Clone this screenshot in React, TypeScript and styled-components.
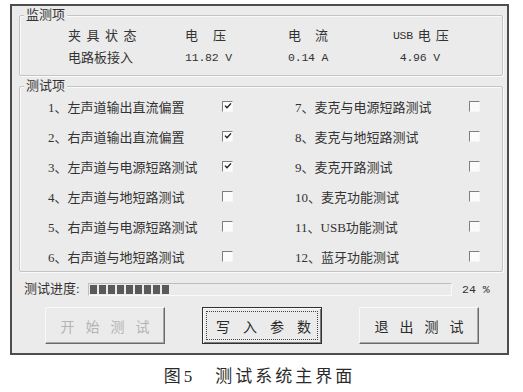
import React from 'react';
import styled, { createGlobalStyle } from 'styled-components';

const CJK = `"Liberation Serif", "Noto Sans CJK SC", serif`;
const MONO = `"Liberation Mono", "Noto Sans CJK SC", monospace`;

const Global = createGlobalStyle`
  html, body { margin: 0; padding: 0; background: #ffffff; }
  body { font-family: ${CJK}; color: #333333; }
`;

const Page = styled.div`
  width: 523px;
  height: 392px;
  box-sizing: border-box;
  padding: 4px 0 0 10px;
  display: flex;
  flex-direction: column;
`;

const Window = styled.div`
  width: 499px;
  height: 351px;
  box-sizing: border-box;
  border: 2px solid #4d4d4d;
  background: #ebebeb;
  padding: 9px 4px 0 7px;
  display: flex;
  flex-direction: column;
`;

const Group = styled.div<{ $h: number; $mt?: number }>`
  position: relative;
  height: ${(p) => p.$h}px;
  margin-top: ${(p) => p.$mt ?? 0}px;
  box-sizing: border-box;
  border: 1px solid #c4c4c4;
  border-radius: 2px;
  box-shadow: inset 1px 1px 0 #fafafa, 1px 1px 0 #fafafa;
`;

const Legend = styled.span`
  position: absolute;
  top: -9px;
  left: 4px;
  padding: 0 2px;
  background: #ebebeb;
  font-size: 13px;
  line-height: 16px;
  color: #333;
`;

const MonitorGrid = styled.div`
  display: grid;
  grid-template-columns: 117px 103px 105px auto;
  grid-template-rows: 16px 16px;
  row-gap: 6px;
  padding: 12px 0 0 48px;
  font-size: 13px;
  line-height: 16px;
  white-space: nowrap;
`;

const Head = styled.span<{ $ls: number }>`
  letter-spacing: ${(p) => p.$ls}px;
  display: flex;
  align-items: center;
`;

const Mono = styled.span`
  font-family: ${MONO};
  font-size: 11.5px;
  letter-spacing: -0.3px;
  margin-right: 5px;
`;

const Value = styled.span`
  font-family: ${MONO};
  font-size: 11.5px;
  letter-spacing: -0.2px;
  display: flex;
  align-items: center;
`;

const TestGrid = styled.div`
  display: grid;
  grid-auto-flow: column;
  grid-template-columns: 247px auto;
  grid-template-rows: repeat(6, 30px);
  padding: 4px 0 0 28px;
`;

const TestItem = styled.div`
  display: grid;
  grid-template-columns: 174px 11px;
  align-items: center;
  font-size: 13px;
  white-space: nowrap;
`;

const Box = styled.span`
  width: 11px;
  height: 11px;
  box-sizing: border-box;
  border: 1px solid;
  border-color: #7e7e7e #f6f6f6 #f6f6f6 #7e7e7e;
  background: #fbfbfb;
  display: flex;
  align-items: center;
  justify-content: center;
`;

const ProgressRow = styled.div`
  display: flex;
  align-items: center;
  height: 14px;
  margin: 10px 0 0 5px;
`;

const ProgressLabel = styled.span`
  width: 64px;
  font-size: 13px;
  line-height: 14px;
  white-space: nowrap;
`;

const Bar = styled.div`
  width: 364px;
  height: 13px;
  box-sizing: border-box;
  border: 1px solid;
  border-color: #bdbdbd #fafafa #fafafa #bdbdbd;
  padding: 1px 1px;
  display: flex;
  gap: 2px;
`;

const Block = styled.span`
  width: 7px;
  height: 100%;
  background: #5a5a5a;
`;

const Percent = styled.span`
  margin-left: 10px;
  font-family: ${MONO};
  font-size: 11.5px;
`;

const ButtonRow = styled.div`
  display: flex;
  gap: 37px;
  margin: 11px 0 0 26px;
`;

const Btn = styled.button<{ $ls: number; $disabled?: boolean; $default?: boolean }>`
  width: 120px;
  height: 37px;
  box-sizing: border-box;
  background: #ebebeb;
  font-family: ${CJK};
  font-size: 14px;
  white-space: nowrap;
  letter-spacing: ${(p) => p.$ls}px;
  padding: 0 0 0 ${(p) => p.$ls}px;
  color: ${(p) => (p.$disabled ? '#b4b4b4' : '#2a2a2a')};
  border: 1px solid;
  border-color: ${(p) => (p.$default ? '#303030' : '#f8f8f8 #6a6a6a #6a6a6a #f8f8f8')};
  box-shadow: ${(p) =>
    p.$default
      ? 'inset 1px 1px 0 #fafafa, inset -1px -1px 0 #7a7a7a'
      : 'inset -1px -1px 0 #a8a8a8'};
  outline: ${(p) => (p.$default ? '1px dotted #444' : 'none')};
  outline-offset: -5px;
`;

const Caption = styled.div`
  width: 499px;
  margin-top: 11px;
  text-align: center;
  font-family: ${CJK};
  font-size: 17px;
  line-height: 22px;
  letter-spacing: 3px;
  color: #2a2a2a;
`;

const Tick = () => (
  <svg width="8" height="8" viewBox="0 0 8 8">
    <path d="M1 3.6 L3 5.8 L7 1.4" fill="none" stroke="#1e1e1e" strokeWidth="1.4" />
  </svg>
);

const tests: { label: string; on: boolean }[] = [
  { label: '1、左声道输出直流偏置', on: true },
  { label: '2、右声道输出直流偏置', on: true },
  { label: '3、左声道与电源短路测试', on: true },
  { label: '4、左声道与地短路测试', on: false },
  { label: '5、右声道与电源短路测试', on: false },
  { label: '6、右声道与地短路测试', on: false },
  { label: '7、麦克与电源短路测试', on: false },
  { label: '8、麦克与地短路测试', on: false },
  { label: '9、麦克开路测试', on: false },
  { label: '10、麦克功能测试', on: false },
  { label: '11、USB功能测试', on: false },
  { label: '12、蓝牙功能测试', on: false },
];

const percent = 24;
const barInner = 362;
const blockCount = Math.floor(((percent / 100) * barInner) / 9);

export default function App() {
  return (
    <>
      <Global />
      <Page>
        <Window>
          <Group $h={61}>
            <Legend>监测项</Legend>
            <MonitorGrid>
              <Head $ls={5.5}>夹具状态</Head>
              <Head $ls={15}>电压</Head>
              <Head $ls={14}>电流</Head>
              <Head $ls={5}>
                <Mono>USB</Mono>电压
              </Head>
              <Head $ls={0}>电路板接入</Head>
              <Value>11.82 V</Value>
              <Value>0.14 A</Value>
              <Value>&nbsp;4.96 V</Value>
            </MonitorGrid>
          </Group>
          <Group $h={186} $mt={10}>
            <Legend>测试项</Legend>
            <TestGrid>
              {tests.map((t) => (
                <TestItem key={t.label}>
                  <span>{t.label}</span>
                  <Box>{t.on && <Tick />}</Box>
                </TestItem>
              ))}
            </TestGrid>
          </Group>
          <ProgressRow>
            <ProgressLabel>测试进度:</ProgressLabel>
            <Bar>
              {Array.from({ length: blockCount }).map((_, i) => (
                <Block key={i} />
              ))}
            </Bar>
            <Percent>{percent} %</Percent>
          </ProgressRow>
          <ButtonRow>
            <Btn $ls={11} $disabled>开始测试</Btn>
            <Btn $ls={13} $default>写入参数</Btn>
            <Btn $ls={11}>退出测试</Btn>
          </ButtonRow>
        </Window>
        <Caption>图5　测试系统主界面</Caption>
      </Page>
    </>
  );
}
